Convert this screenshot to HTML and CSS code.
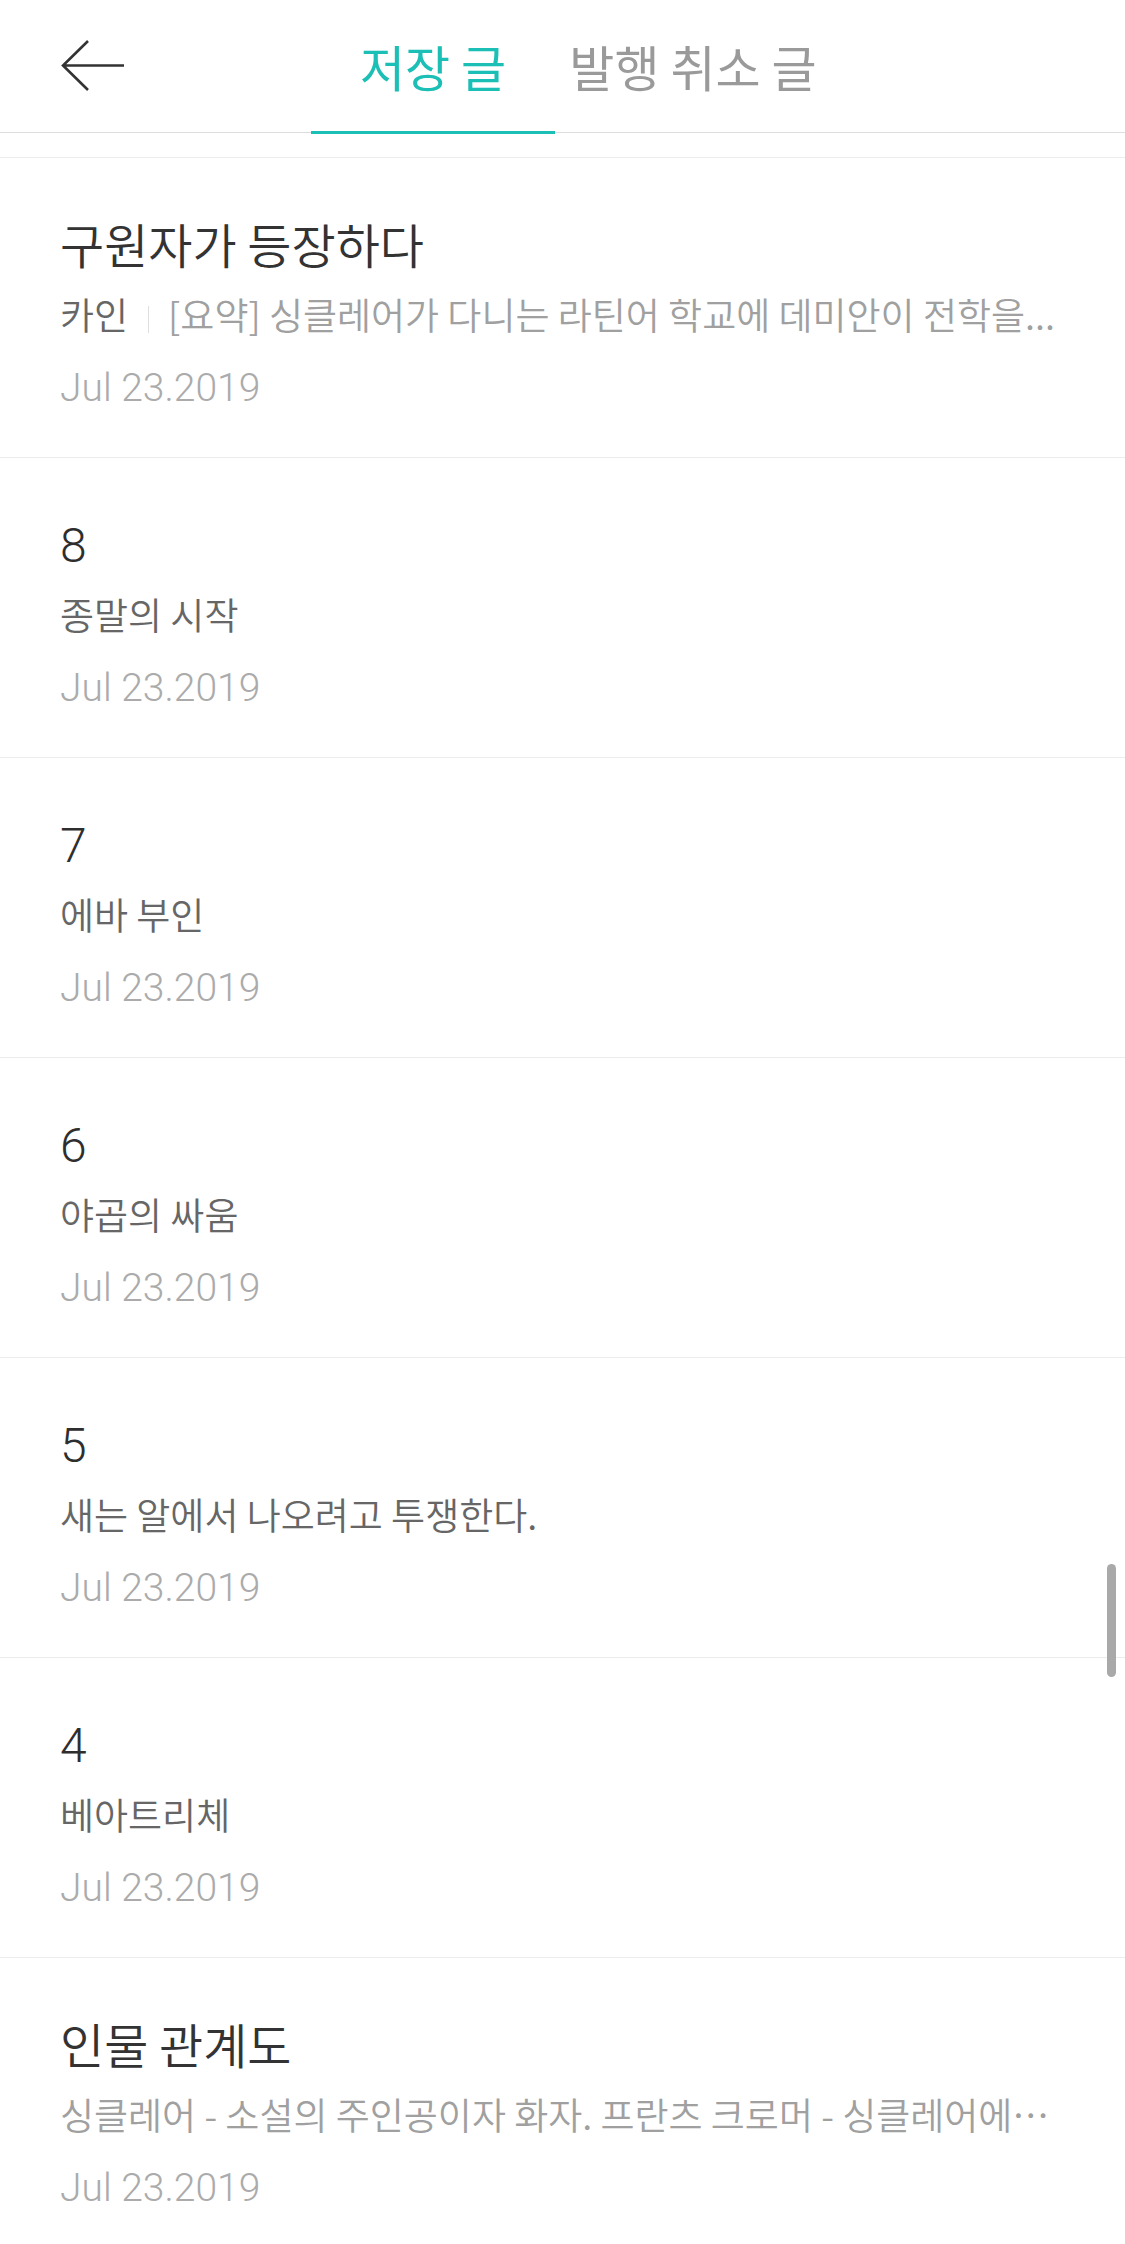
FILE: index.html
```html
<!DOCTYPE html>
<html>
	<head>
		<meta charset="UTF-8">
		<title>저장 글</title>
		<link rel="stylesheet" href="styles.css">
	</head>
	<body>
		<div class="header">
			<a class="back" href="#">
				<svg width="64" height="52" viewBox="0 0 64 52">
					<path d="M27 1 L2 25.5 L27 50 M2 25.5 L63 25.5" fill="none" stroke="#333" stroke-width="2.6"/>
				</svg>
			</a>
			<div class="tabs">
				<div class="tab on">저장 글</div>
				<div class="tab">발행 취소 글</div>
			</div>
		</div>
		<ul class="list">
			<li class="item">
				<div class="title">구원자가 등장하다</div>
				<div class="sub"><span class="author">카인</span><span class="sep"></span><span class="summary">[요약] 싱클레어가 다니는 라틴어 학교에 데미안이 전학을...</span></div>
				<div class="date">Jul 23.2019</div>
			</li>
			<li class="item">
				<div class="title num">8</div>
				<div class="sub">종말의 시작</div>
				<div class="date">Jul 23.2019</div>
			</li>
			<li class="item">
				<div class="title num">7</div>
				<div class="sub">에바 부인</div>
				<div class="date">Jul 23.2019</div>
			</li>
			<li class="item">
				<div class="title num">6</div>
				<div class="sub">야곱의 싸움</div>
				<div class="date">Jul 23.2019</div>
			</li>
			<li class="item">
				<div class="title num">5</div>
				<div class="sub">새는 알에서 나오려고 투쟁한다.</div>
				<div class="date">Jul 23.2019</div>
			</li>
			<li class="item">
				<div class="title num">4</div>
				<div class="sub">베아트리체</div>
				<div class="date">Jul 23.2019</div>
			</li>
			<li class="item">
				<div class="title">인물 관계도</div>
				<div class="sub light">싱클레어 - 소설의 주인공이자 화자. 프란츠 크로머 - 싱클레어에⋯</div>
				<div class="date">Jul 23.2019</div>
			</li>
		</ul>
		<div class="scrollbar"></div>
	</body>
</html>
```

FILE: styles.css
```css
body{
	margin: 0;
	background: #fff;
	font-family: "Noto Sans CJK KR", sans-serif;
	color: #333;
}
.header{
	display: flex;
	height: 132px;
	border-bottom: 1px solid #dddddd;
}
.back{
	display: block;
	align-self: center;
	margin-left: 61px;
	height: 52px;
}
.back svg{
	display: block;
}
.tabs{
	display: flex;
	gap: 16px;
	margin-left: 186px;
}
.tab{
	display: flex;
	align-items: center;
	justify-content: center;
	box-sizing: border-box;
	width: 244px;
	height: 134px;
	border-bottom: 3px solid transparent;
	font-size: 49px;
	line-height: 66px;
	color: #9a9a9a;
	white-space: nowrap;
}
.tab.on{
	color: #1bbfb6;
	border-bottom-color: #1bbfb6;
}
.list{
	margin: 24px 0 0;
	padding: 0;
	list-style: none;
}
.item{
	border-top: 1px solid #ececec;
	padding: 55px 60px 45px;
}
.title{
	height: 60px;
	font-size: 48px;
	font-weight: 350;
	line-height: 60px;
	color: #333;
	white-space: nowrap;
}
.title.num{
	font-family: Roboto, "Noto Sans CJK KR", sans-serif;
	font-weight: 300;
	line-height: 66px;
	color: #2e2e2e;
}
.sub{
	margin-top: 17px;
	font-size: 37px;
	font-weight: 350;
	line-height: 48px;
	color: #666;
	white-space: nowrap;
}
.sub.light,
.summary{
	color: #a0a0a0;
}
.sep{
	display: inline-block;
	width: 1px;
	height: 27px;
	margin: 0 19px 0 20px;
	background: #dedede;
	vertical-align: -3px;
}
.date{
	margin-top: 26px;
	font-family: Roboto, sans-serif;
	font-weight: 300;
	font-size: 39px;
	line-height: 48px;
	color: #ababab;
}
.scrollbar{
	position: fixed;
	top: 1564px;
	right: 9px;
	width: 9px;
	height: 113px;
	border-radius: 5px;
	background: #a9a9a9;
}
```
